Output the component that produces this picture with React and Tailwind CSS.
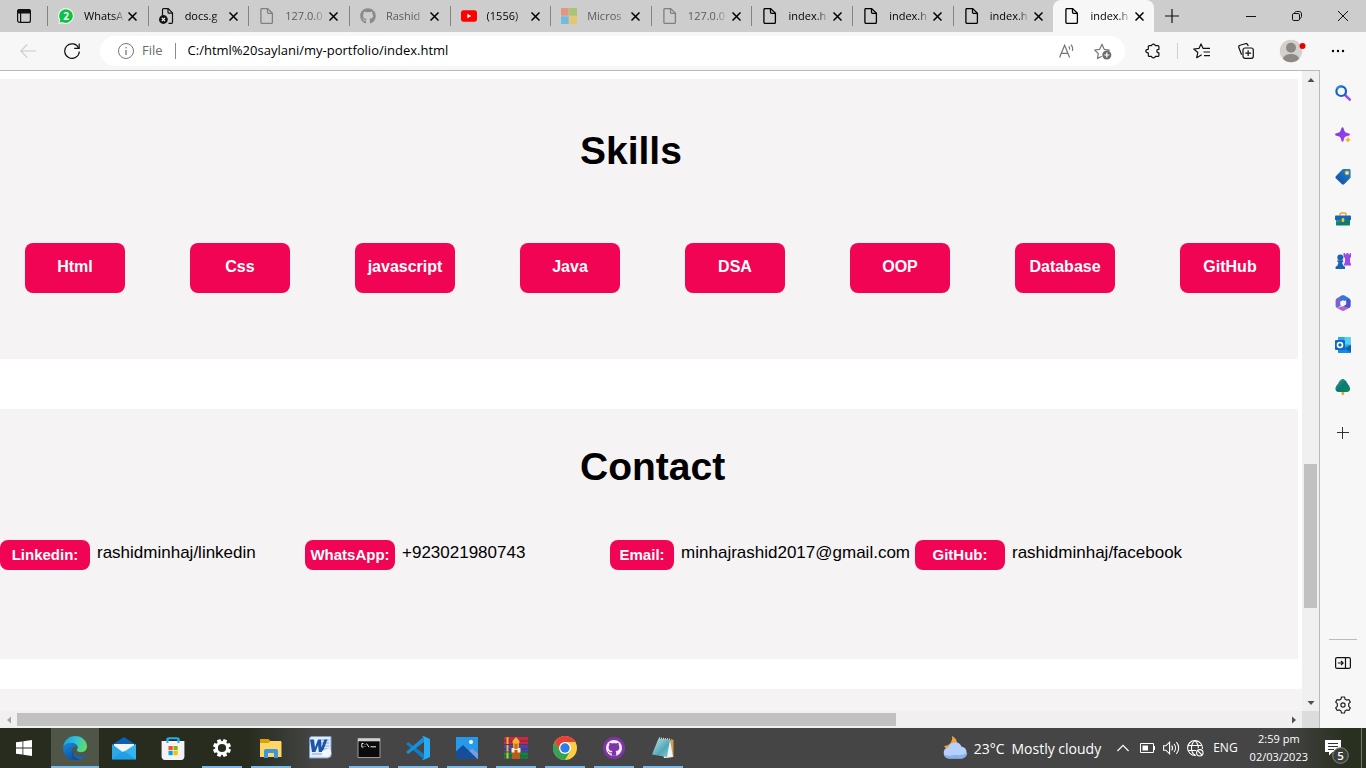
import React from "react";
import { FaGithub } from "react-icons/fa";

const UI_FONT = "font-['Open_Sans','Noto_Sans',sans-serif]";
const PAGE_FONT = "font-['Liberation_Sans',Arial,sans-serif]";

/* ---------- tab icons ---------- */

function FileIcon() {
  return (
    <svg width="16" height="16" viewBox="0 0 16 16" fill="none" stroke="currentColor" strokeWidth="1.3" strokeLinejoin="round">
      <path d="M3 .6h5.700l4.700 4.700v9c0 .6-.4 1.100-1 1.100H3c-.6 0-1.100-.5-1.100-1.100V1.700C1.900 1.100 2.400.6 3 .6z" />
      <path d="M8.500.8v3.500c0 .6.400 1 1 1h3.700" />
    </svg>
  );
}

function WhatsAppIcon() {
  return (
    <svg width="16" height="16" viewBox="0 0 16 16">
      <path d="M8 0a8 8 0 1 1-3.600 15.200L.3 16l.9-3.900A8 8 0 0 1 8 0z" fill="#e9f7ec" />
      <path d="M8 1.200a6.800 6.800 0 1 1-3.400 12.700l-2.900.7.700-2.800A6.800 6.800 0 0 1 8 1.200z" fill="#0cc143" />
      <text x="8" y="11.600" textAnchor="middle" fontSize="10" fontWeight="700" fill="#fff" className={UI_FONT}>2</text>
    </svg>
  );
}

function MissingFileIcon() {
  return (
    <svg width="16" height="16" viewBox="0 0 16 16" fill="none" stroke="#111" strokeWidth="1.200">
      <path d="M3.500 7V1.700c0-.6.4-1.100 1-1.100h4.700l4.300 4.300v9.400c0 .6-.4 1.100-1 1.100H9.500" />
      <path d="M9 .8v3.400c0 .6.400 1 1 1h3.400" />
      <circle cx="4.400" cy="11.500" r="4.400" fill="#111" stroke="none" />
      <path d="M2.800 9.900l3.200 3.200M6 9.900l-3.200 3.200" stroke="#fff" />
    </svg>
  );
}

function GithubTabIcon() {
  return <FaGithub size={16} color="#8a8a8a" />;
}

function YoutubeIcon() {
  return (
    <svg width="16" height="16" viewBox="0 0 16 16">
      <rect x="0" y="2.300" width="16" height="11.400" rx="2.600" fill="#f00" />
      <path d="M6.300 5.700v4.600l4-2.300z" fill="#fff" />
    </svg>
  );
}

function MicrosoftIcon() {
  return (
    <svg width="16" height="16" viewBox="0 0 16 16">
      <path d="M0 0h7.700v7.700H0z" fill="#df9983" />
      <path d="M8.300 0H16v7.700H8.300z" fill="#a9c572" />
      <path d="M0 8.300h7.700V16H0z" fill="#74bae0" />
      <path d="M8.300 8.300H16V16H8.300z" fill="#e7c670" />
    </svg>
  );
}

const tabs = [
  { title: "WhatsA", Icon: WhatsAppIcon },
  { title: "docs.g", Icon: MissingFileIcon },
  { title: "127.0.0", Icon: FileIcon, dim: true },
  { title: "Rashid", Icon: GithubTabIcon, dim: true },
  { title: "(1556)", Icon: YoutubeIcon },
  { title: "Micros", Icon: MicrosoftIcon, dim: true },
  { title: "127.0.0", Icon: FileIcon, dim: true },
  { title: "index.h", Icon: FileIcon },
  { title: "index.h", Icon: FileIcon },
  { title: "index.h", Icon: FileIcon },
  { title: "index.h", Icon: FileIcon, active: true },
];

function Tab({ title, Icon, dim, active }) {
  return (
    <div
      className={
        "flex h-8 min-w-0 flex-1 items-center " +
        (active ? "rounded-t-lg bg-[#f7f7f7] text-black" : dim ? "text-[#5c5c5c]" : "text-black")
      }
    >
      <span className={"h-5 w-px shrink-0 " + (active ? "" : "bg-[#838383]")} />
      <button className="ml-2.5 flex min-w-0 flex-1 items-center gap-2.5 text-left">
        <span className={"shrink-0 " + (dim ? "text-[#808080]" : "text-black")}><Icon /></span>
        <span className="min-w-0 flex-1 whitespace-nowrap text-[11px] leading-4 [mask-image:linear-gradient(to_right,black_70%,transparent)]">
          {title}
        </span>
      </button>
      <button aria-label={"Close " + title} className="mr-[7px] flex h-4 w-4 shrink-0 items-center justify-center text-black">
        <svg width="9" height="9" viewBox="0 0 9 9" stroke="currentColor" strokeWidth="1.500"><path d="M.5.5l8 8M8.500.5l-8 8" /></svg>
      </button>
    </div>
  );
}

function TabStrip() {
  return (
    <header className="flex h-8 shrink-0 items-center bg-[#cdcdcd]">
      <button aria-label="Tab actions" className="flex w-[47px] shrink-0 justify-center">
        <svg width="14" height="14" viewBox="0 0 14 14" fill="none" stroke="#111" strokeWidth="1.200">
          <rect x=".6" y=".6" width="12.800" height="12.800" rx="2" />
          <path d="M.6 2.600c0-1.200.8-2 2-2h8.800c1.200 0 2 .8 2 2V4H.6z" fill="#111" />
          <path d="M3.600 4v9.400" />
        </svg>
      </button>
      <nav aria-label="Tabs" className="flex max-w-[1107px] flex-1">
        {tabs.map((t, i) => <Tab key={i} {...t} />)}
      </nav>
      <button aria-label="New tab" className="flex w-9 shrink-0 justify-center">
        <svg width="14" height="14" viewBox="0 0 14 14" stroke="#111" strokeWidth="1.200"><path d="M7 0v14M0 7h14" /></svg>
      </button>
      <div className="ml-auto flex">
        <button aria-label="Minimize" className="flex h-8 w-[46px] items-center justify-center">
          <svg width="10" height="10" viewBox="0 0 10 10" stroke="#111"><path d="M0 5.500h10" /></svg>
        </button>
        <button aria-label="Restore" className="flex h-8 w-[46px] items-center justify-center">
          <svg width="10" height="10" viewBox="0 0 10 10" fill="none" stroke="#111">
            <rect x=".5" y="2.500" width="7" height="7" rx="1.300" />
            <path d="M2.500 2.300C2.600 1.200 3.400.5 4.500.5h2.700c1.300 0 2.300 1 2.300 2.300v2.700c0 1.100-.7 1.900-1.800 2" />
          </svg>
        </button>
        <button aria-label="Close window" className="flex h-8 w-[46px] items-center justify-center">
          <svg width="10" height="10" viewBox="0 0 10 10" stroke="#111"><path d="M0 0l10 10M10 0L0 10" /></svg>
        </button>
      </div>
    </header>
  );
}

/* ---------- toolbar ---------- */

function Toolbar() {
  const btn = "flex h-8 w-8 shrink-0 items-center justify-center";
  return (
    <div className="flex h-[38px] shrink-0 items-center bg-[#f7f7f7] px-3">
      <button aria-label="Back" className={btn}>
        <svg width="16" height="14" viewBox="0 0 16 14" fill="none" stroke="#cacaca" strokeWidth="1.100"><path d="M16 7H.8M7.300.4L.7 7l6.600 6.600" /></svg>
      </button>
      <button aria-label="Refresh" className={btn + " ml-3"}>
        <svg width="16" height="16" viewBox="0 0 16 16" fill="none" stroke="#111" strokeWidth="1.200">
          <path d="M14.700 5.200A7.300 7.300 0 1 0 15.300 8.500" />
          <path d="M15.200.4v5h-5" />
        </svg>
      </button>
      <div className="ml-3 flex h-[30px] flex-1 items-center rounded-full bg-white pl-[18px] pr-2.5">
        <svg className="shrink-0" width="16" height="16" viewBox="0 0 16 16" fill="none" stroke="#767676" strokeWidth="1">
          <circle cx="8" cy="8" r="7.500" />
          <path d="M8 7v5" strokeWidth="1.300" /><circle cx="8" cy="4.800" r=".8" fill="#767676" stroke="none" />
        </svg>
        <label htmlFor="address" className="ml-2 text-[13px] text-[#6b6b6b]">File</label>
        <span className="ml-3 h-4 w-px bg-[#8a8a8a]" />
        <input id="address" defaultValue="C:/html%20saylani/my-portfolio/index.html" className="ml-3 min-w-0 flex-1 bg-transparent text-[13px] text-black outline-none" />
        <button aria-label="Read aloud" className="flex h-6 w-6 items-center justify-center">
          <svg width="16" height="14" viewBox="0 0 16 14" fill="none" stroke="#767676" strokeWidth="1.200">
            <path d="M.6 13.500L5.600 1.200l5 12.300M2.400 9.300h6.400" />
            <path d="M9.700 2.300c.9 1 1.100 2.100.9 3.300M11.900.6c1.600 1.700 2.100 4 1.500 6.300" />
          </svg>
        </button>
        <button aria-label="Add to favorites" className="ml-3 flex h-6 w-6 items-center justify-center">
          <svg width="18" height="17" viewBox="0 0 18 17" fill="none" stroke="#767676" strokeWidth="1.200" strokeLinejoin="round">
            <path d="M7.800 13.200l-4.300 2.400.8-5L.7 7l5-.7L8 1.200l2.200 5.100 5 .7-1.300 1.200" />
            <circle cx="12.800" cy="12" r="4.500" fill="#6b6b6b" stroke="none" />
            <path d="M12.800 9.500v5M10.300 12h5" stroke="#fff" />
          </svg>
        </button>
      </div>
      <button aria-label="Extensions" className={btn + " ml-3"}>
        <svg width="16" height="16" viewBox="0 0 16 16" fill="none" stroke="#111" strokeWidth="1.200" strokeLinejoin="round">
          <path d="M4.300 2.600h2.200a2 2 0 0 1 3.900 0h2.500c.6 0 1 .4 1 1v2.700c-2.700-.2-2.800 3.600 0 3.500v2.600c0 .6-.4 1-1 1h-2.500a2 2 0 0 1-3.900 0H4.300c-.6 0-1-.4-1-1V9.900c-3.300-.1-3.300-3.600 0-3.600V3.600c0-.6.4-1 1-1z" />
        </svg>
      </button>
      <span className="ml-2 h-4 w-px bg-[#cfcfcf]" />
      <button aria-label="Favorites" className={btn + " ml-2"}>
        <svg width="18" height="16" viewBox="0 0 18 16" fill="none" stroke="#111" strokeWidth="1.200" strokeLinejoin="round">
          <path d="M8.700 11.700l-5 3 1.100-5.200L.8 6l5.200-.6L8 .9l2 4.400h7M10.500 9H17M11 12.600h6" />
        </svg>
      </button>
      <button aria-label="Collections" className={btn + " ml-3"}>
        <svg width="16" height="16" viewBox="0 0 16 16" fill="none" stroke="#111" strokeWidth="1.200">
          <rect x="5" y="5" width="10.300" height="10.300" rx="2" />
          <path d="M10.150 7.300v5.800M7.300 10.200h5.800" />
          <path d="M3.600 11.800L.9 4.700c-.4-1 .1-2 1.100-2.400L7.300.7c1-.3 2.100.2 2.400 1.200L10.300 3" />
        </svg>
      </button>
      <button aria-label="Profile" className={btn + " ml-3.5"}>
        <svg width="28" height="24" viewBox="0 0 28 24">
          <defs><clipPath id="face"><circle cx="13" cy="12" r="11.200" /></clipPath></defs>
          <g clipPath="url(#face)">
            <path d="M0 0h26v24H0z" fill="#d3d0ce" />
            <circle cx="13" cy="8.800" r="5" fill="#8c8886" />
            <ellipse cx="13" cy="20" rx="8" ry="5" fill="#8c8886" />
          </g>
          <circle cx="24.500" cy="7" r="3" fill="#e60000" />
        </svg>
      </button>
      <button aria-label="Settings and more" className={btn + " ml-3.5"}>
        <svg width="14" height="4" viewBox="0 0 14 4"><circle cx="2" cy="2" r="1.200" /><circle cx="7" cy="2" r="1.200" /><circle cx="12" cy="2" r="1.200" /></svg>
      </button>
    </div>
  );
}

/* ---------- portfolio page ---------- */

const skills = ["Html", "Css", "javascript", "Java", "DSA", "OOP", "Database", "GitHub"];

const contacts = [
  { label: "Linkedin:", value: "rashidminhaj/linkedin" },
  { label: "WhatsApp:", value: "+923021980743" },
  { label: "Email:", value: "minhajrashid2017@gmail.com" },
  { label: "GitHub:", value: "rashidminhaj/facebook" },
];

function Portfolio() {
  return (
    <main className={"flex min-w-0 flex-1 flex-col overflow-hidden bg-white pt-2 text-black " + PAGE_FONT}>
      <section className="mr-1 shrink-0 bg-[#f5f3f4] pt-12 pb-[66px]">
        <h1 className="pl-[580px] text-[39px] leading-[48px] font-bold">Skills</h1>
        <ul className="mt-[68px] flex justify-between pr-[18px] pl-[25px]">
          {skills.map((s) => (
            <li key={s} className="flex h-[50px] w-[100px] justify-center rounded-lg bg-[#f10453] pt-3 text-base leading-6 font-bold text-white">{s}</li>
          ))}
        </ul>
      </section>
      <section className="mt-[50px] mr-1 shrink-0 bg-[#f5f3f4] pt-[34px] pb-[89px]">
        <h1 className="pl-[580px] text-[39px] leading-[48px] font-bold">Contact</h1>
        <ul className="mt-[49px] flex">
          {contacts.map((c) => (
            <li key={c.label} className="flex w-[305px] items-start gap-[7px] pr-[5px]">
              <span className="flex h-[30px] w-[90px] shrink items-center justify-center rounded-lg bg-[#f10453] text-[15px] font-bold text-white">{c.label}</span>
              <span className="text-[17px] leading-[26px] whitespace-nowrap">{c.value}</span>
            </li>
          ))}
        </ul>
      </section>
      <section className="mt-[30px] flex-1 bg-[#f5f3f4]" />
    </main>
  );
}

function Arrow({ d, color = "#505050" }) {
  return (
    <span className="flex h-[17px] w-[17px] shrink-0 items-center justify-center">
      <svg width="8" height="8" viewBox="0 0 8 8"><path d={d} fill={color} /></svg>
    </span>
  );
}

function Viewport() {
  return (
    <div className="flex min-w-0 flex-1 flex-col border-t border-r border-[#bababa]">
      <div className="flex min-h-0 flex-1">
        <Portfolio />
        <div className="flex w-[17px] flex-col items-center bg-[#f0f0f0]">
          <Arrow d="M.5 6L4 2l3.500 4z" />
          <span className="flex-[376]" />
          <span className="w-[13px] flex-[144] bg-[#c1c1c1]" />
          <span className="flex-[86]" />
          <Arrow d="M.5 2L4 6l3.500-4z" />
        </div>
      </div>
      <div className="flex h-[17px] shrink-0 items-center bg-[#f0f0f0]">
        <Arrow d="M6 .5L2 4l4 3.500z" color="#a3a3a3" />
        <span className="h-[13px] flex-[879] bg-[#c1c1c1]" />
        <span className="flex-[389]" />
        <Arrow d="M2 .5L6 4 2 7.500z" />
        <span className="h-[17px] w-[17px] bg-[#dcdcdc]" />
      </div>
    </div>
  );
}

/* ---------- sidebar ---------- */

const sideIcons = [
  ["Search", (
    <>
      <path d="M10 10l4.800 4.600" stroke="#9a4be8" strokeWidth="2.600" strokeLinecap="round" />
      <circle cx="6.200" cy="6.200" r="4.800" fill="#f3f9ff" stroke="#1661c4" strokeWidth="2.200" />
      <path d="M2 4A4.800 4.800 0 0 1 6.200 1.400" stroke="#2a8fe0" strokeWidth="2.200" fill="none" />
    </>
  )],
  ["Discover", (
    <>
      <path d="M7.500.2c.9 0 1 .7 1.400 2.400.6 2.100 1.200 2.800 3.300 3.400 1.900.5 2.700.6 2.700 1.500s-.8 1-2.700 1.500c-2.100.6-2.700 1.200-3.300 3.300-.4 1.800-.5 2.500-1.400 2.500s-1-.7-1.400-2.500C5.500 10.200 4.800 9.600 2.700 9 .9 8.500.1 8.400.1 7.500S.9 6.500 2.700 6c2.100-.6 2.800-1.300 3.400-3.400C6.500.9 6.600.2 7.500.2z" fill="url(#violet)" />
      <path d="M13 9.200l.9 2.900 2.100.8-2.100.8-.9 2.300-.9-2.300-2.300-.8 2.300-.8z" fill="#f5ad12" />
    </>
  )],
  ["Shopping", (
    <>
      <path d="M8.500 0h5.700c.8 0 1.400.6 1.400 1.400V8c0 .5-.2.900-.5 1.200l-6 6.100c-.6.6-1.500.6-2.100 0L.8 9.300c-.5-.6-.5-1.400 0-2L7.300.5c.3-.3.800-.5 1.200-.5z" fill="url(#blue)" />
      <circle cx="12" cy="3.900" r="1.800" fill="#ffe9a3" stroke="#eeb420" />
    </>
  )],
  ["Tools", (
    <>
      <path d="M5 4.500V3.300c0-.8.500-1.300 1.300-1.300h3.400c.8 0 1.300.5 1.300 1.300v1.200" fill="none" stroke="#f2a91b" strokeWidth="1.600" />
      <path d="M1 8h14v5.500c0 .6-.4 1-1 1H2c-.6 0-1-.4-1-1z" fill="url(#teal)" />
      <path d="M.9 4.500h14.200c.5 0 .9.400.9.900V9H0V5.400c0-.5.4-.9.900-.9z" fill="#1765b8" />
      <rect x="6.700" y="7" width="2.600" height="4" rx="1" fill="#ffbd28" />
    </>
  )],
  ["Games", (
    <>
      <path d="M8.500 0H10v1.300h1.500V0h1.900v1.300h1.500V0h1.400v4l-1.200 1v4l1.300 3.500H8.500L10 9V5L8.500 4z" fill="#9a4ae5" />
      <circle cx="5.300" cy="4.600" r="3" fill="#1a62b5" />
      <path d="M2.400 7.200h5.800v1.600l-1.100.9 1.200 3 1.700 1V16H.6v-2.300l1.700-1 1.200-3-1.100-.9z" fill="#1a62b5" />
    </>
  )],
  ["Microsoft 365", (
    <>
      <path d="M6.500.6C7.500 0 8.600 0 9.500.5l4.600 2.700c.9.500 1.400 1.300 1.400 2.400v2.700L10.300 5.400 5 7.700V1.500z" fill="#2f7bd7" />
      <path d="M6.500.6L2 3.200C1.100 3.700.6 4.500.6 5.600v5c0 1 .5 1.900 1.400 2.400l3.700-2.200V4.400c0-2 0-3.200.8-3.800z" fill="#7866cf" />
      <path d="M2 13l4.500 2.500c1 .6 2.100.6 3 0l4.600-2.600c.9-.5 1.400-1.300 1.400-2.400V8.200l-5 2.900-4.300.4z" fill="#b166d5" />
      <path d="M15.500 5.600v5c0 1-.5 1.900-1.400 2.300L8.300 11l2.900-2V5.300L13 3z" fill="#4a54c8" />
      <path d="M8 5.200l2.800 1.500v3L8 11 5.300 9.500V6.600z" fill="#f7f7f7" />
    </>
  )],
  ["Outlook", (
    <>
      <path d="M3 0h11.500c.6 0 1 .4 1 1v14H3z" fill="#28a8ea" />
      <path d="M9.500 0h6V7.500h-6z" fill="#50d0f5" />
      <path d="M3 8l6.800 3L16 7.500V15c0 .6-.4 1-1 1H4c-.6 0-1-.4-1-1z" fill="#148bdd" />
      <path d="M9.800 11.500L16 8v7.600z" fill="#0a62b5" />
      <rect x="0" y="3" width="10" height="10" rx="1" fill="#0f68c2" />
      <circle cx="5" cy="8" r="2.500" fill="none" stroke="#fff" strokeWidth="1.600" />
    </>
  )],
  ["Drop", (
    <>
      <path d="M6.600 11h2.600v4.300c0 .5-.4.700-.8.700h-1c-.500 0-.8-.3-.8-.7z" fill="#f3a51d" />
      <path d="M7.800 0c1.700 0 4 2.800 4.600 4.500 1.300 1.300 2.700 3.600 2.700 5.200 0 2-1.200 3.200-3.300 3.200H3.600C1.500 12.900.4 11.700.4 9.800c0-1.700 1.400-4 2.800-5.300C3.800 2.800 6 0 7.800 0z" fill="url(#teal)" />
    </>
  )],
];

function Sidebar() {
  const btn = "flex h-[42px] w-full shrink-0 items-center justify-center";
  return (
    <aside className="flex w-[46px] shrink-0 flex-col bg-[#f7f7f7] py-0.5">
      <svg width="0" height="0" className="absolute">
        <defs>
          <linearGradient id="violet" x1="0" y1="0" x2="1" y2="1"><stop stopColor="#6a3be5" /><stop offset="1" stopColor="#b43df2" /></linearGradient>
          <linearGradient id="blue" x1="1" y1="0" x2="0" y2="1"><stop stopColor="#2186d6" /><stop offset="1" stopColor="#104a9f" /></linearGradient>
          <linearGradient id="teal" x1="0" y1="0" x2="1" y2="1"><stop stopColor="#3f9f75" /><stop offset=".5" stopColor="#087a78" /><stop offset="1" stopColor="#118a54" /></linearGradient>
        </defs>
      </svg>
      {sideIcons.map(([name, art]) => (
        <button key={name} aria-label={name} className={btn}>
          <svg width="16" height="16" viewBox="0 0 16 16">{art}</svg>
        </button>
      ))}
      <button aria-label="Customize sidebar" className={btn + " mt-1"}>
        <svg width="12" height="12" viewBox="0 0 12 12" stroke="#333"><path d="M5.500 0v12M0 5.500h12" /></svg>
      </button>
      <span className="mx-[9px] mt-auto mb-0.5 h-px shrink-0 bg-[#bcbcbc]" />
      <button aria-label="Hide sidebar" className={btn}>
        <svg width="16" height="12" viewBox="0 0 16 12" fill="none" stroke="#111" strokeWidth="1.200">
          <rect x=".6" y=".6" width="14.800" height="10.800" rx="1.500" />
          <path d="M10.500.6v10.800M2.800 6h5M6 3.900L8.100 6 6 8.100" />
        </svg>
      </button>
      <button aria-label="Sidebar settings" className={btn}>
        <svg width="18" height="18" viewBox="0 0 18 18" fill="none" stroke="#222" strokeWidth="1.200" strokeLinejoin="round">
          <path d="M7.500 1h3l.6 2.200 1.500.9 2.200-.6 1.500 2.600-1.600 1.600v2.600l1.600 1.600-1.500 2.600-2.200-.6-1.500.9-.6 2.200h-3l-.6-2.200-1.500-.9-2.200.6-1.500-2.600 1.600-1.600V7.700L1.700 6.100l1.500-2.600 2.200.6 1.500-.9z" />
          <circle cx="9" cy="9" r="2.100" />
        </svg>
      </button>
    </aside>
  );
}

/* ---------- taskbar ---------- */

const gearTeeth = [0, 45, 90, 135, 180, 225, 270, 315];

const apps = [
  { name: "Microsoft Edge", active: true, running: true, art: (
    <>
      <defs>
        <linearGradient id="edgeTop" x1="0" y1=".3" x2="1" y2=".6"><stop stopColor="#1c9ee0" /><stop offset=".5" stopColor="#33c4d8" /><stop offset="1" stopColor="#62df58" /></linearGradient>
        <linearGradient id="edgeLow" x1="0" y1="0" x2=".6" y2="1"><stop stopColor="#1b8bd8" /><stop offset="1" stopColor="#0c50a2" /></linearGradient>
      </defs>
      <path d="M.2 11C.8 4.700 5.800 0 12 0c7 0 12 5 12 10.500 0 3.500-2.600 5.700-5.800 5.700-2.600 0-4.400-1-4.400-1.900 0-.6.9-1 .9-2.700 0-2-2.200-4.700-6.400-4.700C4.500 6.900 1.500 8.600.2 11z" fill="url(#edgeTop)" />
      <path d="M.1 11.800C1.300 8.600 4.500 6.800 8.300 6.800c4 0 6.400 2.500 6.400 4.800-1.300-2-5.300-1.300-5.600 2.400-.4 4.600 4.200 8 9 7.500C16.500 23 14.400 24 12 24 5 24-.3 18.300.1 11.800z" fill="url(#edgeLow)" />
      <path d="M9.100 14c0 4.100 4.600 6.600 8.700 6 1.800-.3 3.400-1 4.200-1.700.6-.4 1 .1.600.7-1.200 1.900-3 3.400-5 4.200-4.300.9-9.800-3-8.500-9.200z" fill="#1666b5" />
      <path d="M9.100 14c-.8 3 .4 6 2.700 8.300 1.400 1.300 3.200 1.500 5.200 1-4.900.6-7.900-4.600-7.900-9.300z" fill="#0b4189" />
    </>
  ) },
  { name: "Mail", art: (
    <>
      <path d="M0 8.800L12 1l12 7.800V12H0z" fill="#0c5fb3" />
      <path d="M2 8h20v10H2z" fill="#f4f4f4" />
      <path d="M0 8l12 9L24 8v15.300H0z" fill="#2ba8e8" />
      <path d="M0 23.300L24 8v15.300z" fill="#34b5f2" /><path d="M12 15L24 23.300H0z" fill="#1795e4" opacity=".7" />
    </>
  ) },
  { name: "Microsoft Store", art: (
    <>
      <path d="M6.500 7V3.500c0-.8.500-1.300 1.300-1.300h8.400c.8 0 1.300.5 1.300 1.300V7" fill="none" stroke="#1fb1ea" strokeWidth="2" />
      <path d="M.6 5h22.800v15.500c0 1.900-1.300 3.400-3.200 3.400H3.800c-1.900 0-3.200-1.500-3.200-3.400z" fill="#f3f3f3" />
      <path d="M6.500 2.200V7M17.500 2.200V7" stroke="#1fb1ea" strokeWidth="2" />
      <path d="M7.500 10h4.200v4.200H7.500z" fill="#f25022" /><path d="M12.500 10h4.200v4.200h-4.200z" fill="#7fba00" />
      <path d="M7.500 15h4.200v4.200H7.500z" fill="#00a4ef" /><path d="M12.500 15h4.200v4.200h-4.200z" fill="#ffb900" />
    </>
  ) },
  { name: "Settings", running: true, art: (
    <>
      {gearTeeth.map((a) => <path key={a} d="M10.200 3h3.600l.5 4h-4.600z" fill="#fff" transform={`rotate(${a + 22.5} 12 12)`} />)}
      <circle cx="12" cy="12" r="5.400" fill="none" stroke="#fff" strokeWidth="2.600" />
    </>
  ) },
  { name: "File Explorer", running: true, art: (
    <>
      <path d="M1 3h8.500l2 2H22v4H1z" fill="#e0a000" />
      <path d="M1 7h8.500l2-2H21c1 0 1.500.5 1.500 1.500V21H1z" fill="#ffd766" />
      <path d="M5 22v-7c0-1.200.7-2 2-2h10c1.300 0 2 .8 2 2v7h-4v-5H9v5z" fill="#3c96d9" />
    </>
  ) },
  { name: "Word", art: (
    <>
      <path d="M3 .5h20v20l-3 1.500H1.500V2z" fill="#e2edf9" stroke="#7c9ed1" />
      <path d="M13 4h8M13 7h8M14 10h7M14 13h7M4 18h10" stroke="#85a8d8" />
      <path d="M2 3.500h4l1 8 3-8h3l.5 8 2.800-8h3.200L14.500 16h-3.700l-.7-6.700L7.400 16H4z" fill="#1b55a8" />
      <path d="M14 15l8-3 1.500 6-6 3-3.500-2z" fill="#f3f6fb" />
    </>
  ) },
  { name: "Command Prompt", running: true, art: (
    <>
      <path d="M1 2.500h22v19H1z" fill="#0a0a0a" stroke="#9c9c9c" />
      <path d="M1 2.500h22v2.800H1z" fill="#cdd1d6" />
      <path d="M6.500 7.500H4.800v3.500h1.700M8 8.300v.6M8 10.300v.7M9.500 7.500l2.500 3.700M13.500 10.800h5.500" fill="none" stroke="#eee" />
    </>
  ) },
  { name: "Visual Studio Code", running: true, art: (
    <>
      <path d="M0 8l2.200-2L18 18v5.500z" fill="#0f7dc5" />
      <path d="M0 16l2.200 2L18 6V.5z" fill="#1a8fd8" />
      <path d="M17.500 0L24 3v18l-6.500 3c-.6-.2-1-.6-1.500-1 1 .4 2-.2 2-1.300V2.300C18 1.200 17 .6 16 1z" fill="#2aaaf0" />
    </>
  ) },
  { name: "Photos", running: true, art: (
    <>
      <path d="M1 1h22v22H1z" fill="#2699ea" />
      <path d="M10 18l7-5.500 6 5V23H10z" fill="#7b9be0" />
      <path d="M1 15.500L8 9l14.500 14H1z" fill="#164e9b" />
      <circle cx="16" cy="6" r="2" fill="#fff" />
    </>
  ) },
  { name: "WinRAR", running: true, art: (
    <>
      <path d="M0 1h24v7H0z" fill="#c92747" /><path d="M0 9h24v6.500H0z" fill="#4c44ad" /><path d="M0 16.500h24V22.500H0z" fill="#168345" />
      <path d="M0 5h24M0 13h24M0 20h24" stroke="#111" opacity=".3" />
      <path d="M3.500 1v7M3.500 9v6.500M3.500 16.500v6" stroke="#e8b72a" strokeWidth="2" />
      <path d="M8 14h8v9H8z" fill="#b85b18" />
      <path d="M8.500 5L12 1l3.500 4v2h-7z" fill="#f2b632" />
      <path d="M9 7h6v6H9z" fill="#f0a02a" />
      <path d="M7.500 12h9v4.500h-3V14h-3v2.500h-3z" fill="#f4ebd5" />
      <path d="M10.500 8h3v5h-3z" fill="#d9690f" />
    </>
  ) },
  { name: "Google Chrome", running: true, art: (
    <>
      <circle cx="12" cy="12" r="12" fill="#ffcd40" />
      <path d="M1.600 6A12 12 0 0 1 22.400 6H12l-5.200 9z" fill="#e94235" />
      <path d="M1.600 6a12 12 0 0 0 10.400 18l5.200-9L12 17l-5.200-2z" fill="#34a353" />
      <circle cx="12" cy="12" r="6" fill="#fff" /><circle cx="12" cy="12" r="4.700" fill="#2f7de9" />
    </>
  ) },
  { name: "GitHub Desktop", running: true, art: (
    <>
      <circle cx="12" cy="12" r="11" fill="#8034a9" /><circle cx="12" cy="12" r="8" fill="#f5effa" />
      <path d="M9.800 19.800v-2.500c-1.600.3-2.500-.2-3-1.300-.3-.6-.6-.8-1-1.100 1.600-.2 1.700 1.500 2.900 1.600.5 0 .9-.1 1.200-.4.100-.5.3-.8.500-1-2.600-.4-3.800-1.500-3.800-3.900 0-1 .3-1.700.8-2.300-.2-.6-.2-1.400.1-2.200.9 0 1.600.4 2.300.9 1.500-.4 3-.4 4.400 0 .700-.5 1.400-.9 2.300-.9.3.8.3 1.600.1 2.200.5.6.8 1.300.8 2.300 0 2.400-1.200 3.500-3.800 3.900.4.400.6.900.6 1.600v3.100" fill="#8034a9" />
    </>
  ) },
  { name: "Notepad", running: true, art: (
    <>
      <path d="M20 3l2.500 1v17L13 22z" fill="#d59c4b" />
      <path d="M8 3l11 1 3 17-9 1z" fill="#edf5f6" />
      <path d="M7.500 2.500L19 4l-3 17L1 18.500z" fill="url(#pad)" />
      <path d="M8 2l12 1.500" stroke="#ddd" strokeDasharray="1 1" strokeWidth="1.500" />
      <defs><linearGradient id="pad" x1="0" y1="0" x2="1" y2="1"><stop stopColor="#bfe5e9" /><stop offset=".6" stopColor="#53a8b6" /><stop offset="1" stopColor="#80c9d1" /></linearGradient></defs>
    </>
  ) },
];

function Taskbar() {
  return (
    <footer className="flex h-10 shrink-0 items-center bg-linear-to-r from-[#272c1f] from-18% via-[#454545] via-23% to-[#454545] to-85% text-white">
      <button aria-label="Start" className="mr-[3px] flex w-12 justify-center">
        <svg width="16" height="16" viewBox="0 0 16 16" fill="#fff"><path d="M0 2.300L6.500 1.400v6.200H0zM7.300 1.300L16 0v7.600H7.300zM0 8.400h6.500v6.200L0 13.700zM7.300 8.400H16V16l-8.700-1.300z" /></svg>
      </button>
      <div className="flex gap-px">
        {apps.map((a) => (
          <button key={a.name} aria-label={a.name} className={"flex h-10 w-12 flex-col items-center " + (a.active ? "bg-[#4f5647]" : "")}>
            <svg className="mt-2" width="24" height="24" viewBox="0 0 24 24">{a.art}</svg>
            <span className={"mt-auto h-0.5 " + (a.active ? "w-12 bg-[#76b9ed]" : a.running ? "w-10 bg-[#76b9ed]" : "w-10")} />
          </button>
        ))}
      </div>
      <div className="ml-auto flex h-10 items-center bg-linear-to-r from-[#454545] from-80% to-[#2a3020] to-95%">
        <button className="flex items-center text-[14px]">
          <svg width="25" height="24" viewBox="0 0 25 24">
            <path d="M9 0c5 2 6.500 8 3.500 11-3 3-9.500 3-11.500-1 5 0 9-4 8-10z" fill="#f0a13a" />
            <path d="M6 22.500a5.700 5.700 0 0 1-.6-11.300 7 7 0 0 1 13-.8 6.200 6.200 0 0 1 .6 12.100z" fill="#b5d1fb" />
            <path d="M6 22.500a5.700 5.700 0 0 1-5.200-4c4 2 7 1 10.200.5 4 0 9 1 13.300-2.500a6 6 0 0 1-5.300 6z" fill="#89b0ec" />
          </svg>
          <span className="ml-1.5">23°C</span>
          <span className="ml-[7px]">Mostly cloudy</span>
        </button>
        <button aria-label="Show hidden icons" className="ml-4">
          <svg width="12" height="8" viewBox="0 0 12 8" fill="none" stroke="#fff" strokeWidth="1.200"><path d="M.4 7L6 1.400 11.600 7" /></svg>
        </button>
        <svg className="ml-[11px] shrink-0" width="15" height="10" viewBox="0 0 15 10" fill="none" stroke="#fff"><path d="M.5.5h13v9H.5z" /><path d="M2.500 2.500h5.500v5H2.500z" fill="#fff" stroke="none" /><path d="M14.500 3v4" /></svg>
        <svg className="ml-2 shrink-0" width="17" height="14" viewBox="0 0 17 14" fill="none" stroke="#fff" strokeWidth="1.100"><path d="M.6 4.800h2.300L6.600 1.200v11.600L2.900 9.200H.6z" /><path d="M8.700 4.700c1 1.300 1 3.300 0 4.600M11 3c2 2.300 2 5.700 0 8M13.400 1.200c3 3.400 3 8.200 0 11.600" /></svg>
        <svg className="ml-[7px] shrink-0" width="17" height="17" viewBox="0 0 17 17" fill="none" stroke="#fff" strokeWidth="1.100">
          <path d="M9 15.300A7.400 7.400 0 1 1 15.300 9M1 5.500h14M1 10.500h8" />
          <path d="M8 15.400C3.300 12 3.300 4 8 .6c2.300 2 3.300 4.700 3.300 7.600" />
          <circle cx="12.800" cy="12.800" r="3.200" /><path d="M10.700 10.700l4.300 4.300" />
        </svg>
        <button className="ml-[9px] text-[12px]">ENG</button>
        <button className="ml-3 text-center text-[11px] leading-[18px]">
          <time className="block">2:59 pm</time>
          <time className="block">02/03/2023</time>
        </button>
        <button aria-label="5 notifications" className="ml-4 pt-2">
          <svg width="26" height="26" viewBox="0 0 26 26">
            <path d="M1 1h16v12H8.500L5 16.500V13H1z" fill="#fff" />
            <path d="M4 4.500h10M4 7.500h10M4 10.500h6" stroke="#333" />
            <circle cx="16.500" cy="16.500" r="7.800" fill="#3c3e39" stroke="#8a8c86" />
            <text x="16.500" y="20.800" textAnchor="middle" fontSize="11.500" fontWeight="600" fill="#fff">5</text>
          </svg>
        </button>
        <button aria-label="Show desktop" className="ml-[11px] h-10 w-[5px] border-l border-[#73776c]" />
      </div>
    </footer>
  );
}

export default function App() {
  return (
    <div className={"flex h-screen flex-col overflow-hidden bg-[#f7f7f7] " + UI_FONT}>
      <TabStrip />
      <Toolbar />
      <div className="flex min-h-0 flex-1">
        <Viewport />
        <Sidebar />
      </div>
      <Taskbar />
    </div>
  );
}
